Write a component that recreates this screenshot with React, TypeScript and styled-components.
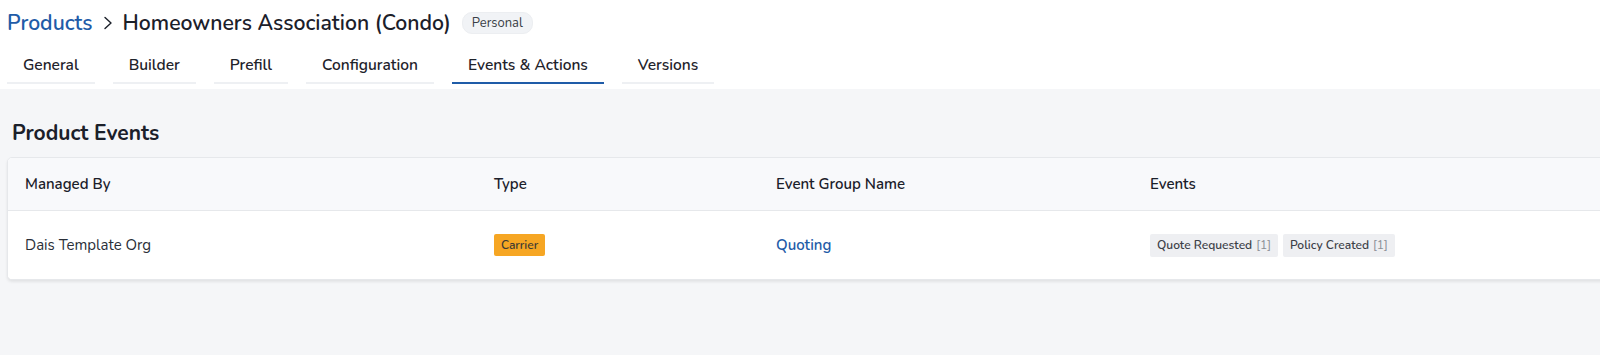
import styled, { createGlobalStyle } from 'styled-components';

const GlobalStyle = createGlobalStyle`
  html, body {
    margin: 0;
    padding: 0;
    background: #f5f6f8;
    overflow-x: hidden;
    font-family: 'Nunito', 'Lato', 'Noto Sans', sans-serif;
    color: #1b202a;
  }
`;

const Page = styled.div`
  min-height: 355px;
  display: flex;
  flex-direction: column;
`;

const Header = styled.header`
  background: #ffffff;
  padding: 0 7px;
  height: 89px;
  display: flex;
  flex-direction: column;
`;

const TitleRow = styled.div`
  display: flex;
  align-items: center;
  height: 46px;
  gap: 11px;
`;

const Crumbs = styled.h1`
  margin: 0;
  display: flex;
  align-items: center;
  gap: 9px;
  font-size: 21.2px;
  font-weight: 600;
  line-height: 28px;
  color: #1b202a;
`;

const CrumbLink = styled.span`
  color: #1f5ca8;
`;

const Chevron = styled.svg`
  width: 12px;
  height: 14px;
  color: #1b202a;
`;

const Pill = styled.span`
  display: inline-flex;
  align-items: center;
  height: 20px;
  padding: 0 9px;
  border-radius: 10px;
  background: #f1f3f6;
  border: 1px solid #eceef1;
  font-size: 13px;
  color: #3a3f47;
`;

const Tabs = styled.nav`
  display: flex;
  gap: 18px;
`;

const Tab = styled.div<{ $active?: boolean }>`
  padding: 0 16px;
  height: 38px;
  display: flex;
  align-items: center;
  font-size: 15.5px;
  font-weight: 600;
  color: #1f232b;
  border-bottom: 2px solid ${(p) => (p.$active ? '#1f5ca8' : '#eef0f3')};
  box-sizing: border-box;
`;

const Main = styled.main`
  padding: 0 0 40px 7px;
`;

const SectionTitle = styled.h2`
  margin: 29px 0 0 5px;
  font-size: 21px;
  font-weight: 700;
  line-height: 30px;
  color: #1b202a;
`;

const Card = styled.section`
  margin-top: 9px;
  margin-right: -10px;
  background: #ffffff;
  border: 1px solid #e6e8eb;
  border-radius: 5px;
  box-shadow: 0 2px 3px rgba(0, 0, 0, 0.08);
  overflow: hidden;
`;

const Row = styled.div<{ $head?: boolean }>`
  display: grid;
  grid-template-columns: 469px 282px 374px 1fr;
  align-items: center;
  height: ${(p) => (p.$head ? '52px' : '68px')};
  background: ${(p) => (p.$head ? '#f8f9fb' : '#ffffff')};
  border-bottom: ${(p) => (p.$head ? '1px solid #e6e8eb' : 'none')};
`;

const Cell = styled.div<{ $head?: boolean }>`
  padding-left: 17px;
  font-size: 15px;
  font-weight: ${(p) => (p.$head ? 600 : 400)};
  color: ${(p) => (p.$head ? '#1b202a' : '#2a2f38')};
  display: flex;
  align-items: center;
  gap: 5px;
`;

const TypeBadge = styled.span`
  display: inline-flex;
  align-items: center;
  height: 22px;
  padding: 0 7px;
  border-radius: 2px;
  background: #f6a623;
  font-size: 12px;
  font-weight: 600;
  color: #3d3a33;
`;

const GroupLink = styled.a`
  color: #1f5ca8;
  font-weight: 600;
  text-decoration: none;
`;

const EventTag = styled.span`
  display: inline-flex;
  align-items: center;
  height: 23px;
  padding: 0 7px;
  border-radius: 2px;
  background: #eeeff2;
  font-size: 12px;
  font-weight: 600;
  color: #3d4148;
`;

const Count = styled.span`
  margin-left: 4px;
  font-weight: 400;
  color: #8a8e95;
`;

const tabs = ['General', 'Builder', 'Prefill', 'Configuration', 'Events & Actions', 'Versions'];

export default function App() {
  return (
    <Page>
      <GlobalStyle />
      <Header>
        <TitleRow>
          <Crumbs>
            <CrumbLink>Products</CrumbLink>
            <Chevron viewBox="0 0 12 14" fill="none">
              <path d="M3 1.5 L9 7 L3 12.5" stroke="currentColor" strokeWidth="1.4" strokeLinecap="round" strokeLinejoin="round" />
            </Chevron>
            <span>Homeowners Association (Condo)</span>
          </Crumbs>
          <Pill>Personal</Pill>
        </TitleRow>
        <Tabs>
          {tabs.map((t) => (
            <Tab key={t} $active={t === 'Events & Actions'}>
              {t}
            </Tab>
          ))}
        </Tabs>
      </Header>
      <Main>
        <SectionTitle>Product Events</SectionTitle>
        <Card>
          <Row $head>
            <Cell $head>Managed By</Cell>
            <Cell $head>Type</Cell>
            <Cell $head>Event Group Name</Cell>
            <Cell $head>Events</Cell>
          </Row>
          <Row>
            <Cell>Dais Template Org</Cell>
            <Cell>
              <TypeBadge>Carrier</TypeBadge>
            </Cell>
            <Cell>
              <GroupLink href="#">Quoting</GroupLink>
            </Cell>
            <Cell>
              <EventTag>
                Quote Requested<Count>[1]</Count>
              </EventTag>
              <EventTag>
                Policy Created<Count>[1]</Count>
              </EventTag>
            </Cell>
          </Row>
        </Card>
      </Main>
    </Page>
  );
}
